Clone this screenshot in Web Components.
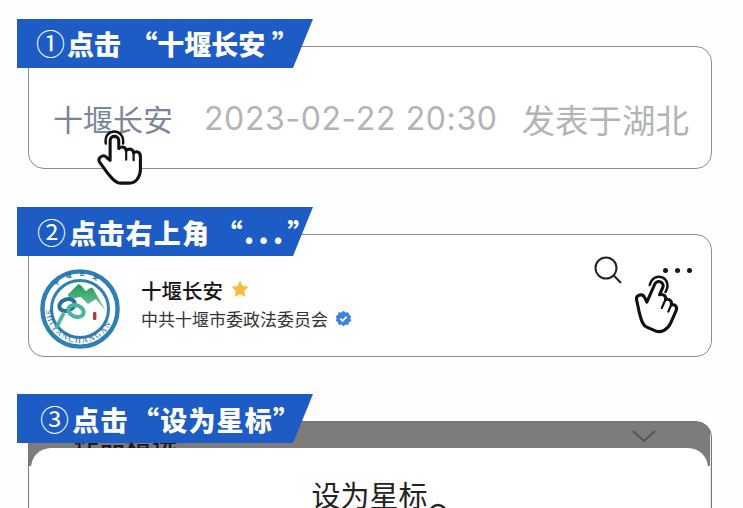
<!DOCTYPE html>
<html lang="zh-CN">
<head>
<meta charset="utf-8">
<title>设为星标</title>
<style>
html,body{margin:0;height:508px;overflow:hidden;background:#fefefe;}
body{font-family:"Noto Sans CJK SC","Noto Sans",sans-serif;}
b.dots{font-weight:900;letter-spacing:4px;font-size:30px;}
</style>
</head>
<body>
<guide-page>
  <guide-step num="①" variant="one">
    <span slot="label">点击 “十堰长安&#8197;”</span>
    <source-line name="十堰长安" time="2023-02-22 20:30" place="发表于湖北"></source-line>
    <hand-cursor style="left:68px;top:83px"></hand-cursor>
  </guide-step>
  <guide-step num="②" variant="two">
    <span slot="label">点击右上角 “<b class="dots">...</b>”</span>
    <account-row name="十堰长安" org="中共十堰市委政法委员会"></account-row>
    <hand-cursor style="left:605px;top:41px" turn="24"></hand-cursor>
  </guide-step>
  <guide-step num="③" variant="three">
    <span slot="label">点击 “设为星标”</span>
    <star-sheet title="设为星标" behind="作品精选"></star-sheet>
  </guide-step>
</guide-page>

<script>
class GuidePage extends HTMLElement {
    constructor() {
        super();
        const shadowRoot = this.attachShadow({ mode: 'open' });
        shadowRoot.innerHTML = `
        <style>
        :host{
            display:flex;
            flex-direction:column;
            gap:65px;
            padding:46px 31px 0 28px;
            height:462px;
            overflow:hidden;
        }
        ::slotted(guide-step){ flex:none; }
        </style>
        <slot></slot>
        `
    }
}
customElements.define('guide-page', GuidePage);

class GuideStep extends HTMLElement {
    constructor() {
        super();
        const shadowRoot = this.attachShadow({ mode: 'open' });
        shadowRoot.innerHTML = `
        <style>
        :host{
            display:block;
            position:relative;
            height:123px;
            box-sizing:border-box;
            border:1px solid #8c8c8c;
            border-radius:16px;
            background:#fff;
        }
        :host([variant="three"]){
            height:140px;
            background:
                linear-gradient(#e8e8e8,#e8e8e8) right 0 top 10px / 1px 100% no-repeat,
                linear-gradient(#7c7c7c 44px,#fff 44px);
            border-color:#777;
            margin-top:-1px;
        }
        .tag{
            position:absolute;
            left:-12px;
            top:-28px;
            z-index:2;
            width:296px;
            height:49px;
            box-sizing:border-box;
            padding-left:19px;
            background:#1c5cc4;
            clip-path:polygon(0 0,100% 0,276px 100%,0 100%);
            color:#fff;
            font-size:27px;
            line-height:46px;
            font-weight:900;
            white-space:pre;
            word-spacing:3px;
        }
        .num{ font-weight:400; font-size:29px; margin-right:2px; }
        :host([variant="two"]) .tag{ letter-spacing:1.2px; padding-left:20px; word-spacing:-2px; line-height:48px; }
        :host([variant="three"]) .tag{ padding-left:23px; letter-spacing:1.2px; word-spacing:-4px; line-height:48px; }
        </style>
        <div class="tag"><span class="num" id="num"></span><slot name="label"></slot></div>
        <slot></slot>
        `
    }

    connectedCallback() {
        this.shadowRoot.getElementById('num').textContent = this.getAttribute('num');
    }
}
customElements.define('guide-step', GuideStep);

class SourceLine extends HTMLElement {
    constructor() {
        super();
        const shadowRoot = this.attachShadow({ mode: 'open' });
        shadowRoot.innerHTML = `
        <style>
        :host{
            display:flex;
            align-items:center;
            height:100%;
            padding:21px 0 0 24px;
            box-sizing:border-box;
            color:#b4b4b4;
            white-space:nowrap;
        }
        .name{ color:#7a8699; font-size:30px; margin-right:31px; }
        .time{ font-family:Inter,"Noto Sans",sans-serif; font-size:32px; letter-spacing:.6px; margin-right:24px; }
        .place{ font-size:33.5px; }
        </style>
        <span class="name" id="name"></span><span class="time" id="time"></span><span class="place" id="place"></span>
        `
    }

    connectedCallback() {
        this.shadowRoot.getElementById('name').textContent = this.getAttribute('name');
        this.shadowRoot.getElementById('time').textContent = this.getAttribute('time');
        this.shadowRoot.getElementById('place').textContent = this.getAttribute('place');
    }
}
customElements.define('source-line', SourceLine);

class HandCursor extends HTMLElement {
    constructor() {
        super();
        const shadowRoot = this.attachShadow({ mode: 'open' });
        shadowRoot.innerHTML = `
        <style>
        :host{
            display:block;
            position:absolute;
            z-index:1;
            width:46px;
            height:55px;
        }
        svg{ display:block; overflow:visible; }
        </style>
        <svg id="svg" width="46" height="55" viewBox="30 14 148 178" fill="none" stroke="#111" stroke-linejoin="round" stroke-linecap="round">
          <path fill="#fff" stroke-width="10" d="M72 48C72 30 100 30 100 48L100 74C110 66 122 68 124 80C134 72 146 76 148 88C158 80 170 86 170 100L170 142C170 166 155 186 135 186L105 186C88 186 78 170 65 155L38 118C30 106 48 90 60 102L72 112Z"/>
          <path stroke-width="8" d="M58 58C50 6 120 6 114 58"/>
          <path stroke-width="7" d="M124 80L124 110M148 88L148 112"/>
        </svg>
        `
    }

    connectedCallback() {
        const turn = this.getAttribute('turn');
        if(turn){
            this.shadowRoot.getElementById('svg').style.transform = 'rotate('+turn+'deg)';
        }
    }
}
customElements.define('hand-cursor', HandCursor);

class AccountLogo extends HTMLElement {
    constructor() {
        super();
        const shadowRoot = this.attachShadow({ mode: 'open' });
        shadowRoot.innerHTML = `
        <style>
        :host{ display:block; width:80px; height:80px; flex:none; }
        svg{ display:block; }
        text{ font-family:"Liberation Serif",serif; }
        </style>
        <svg width="80" height="80" viewBox="0 0 80 80">
          <defs>
            <path id="low" d="M6 40A34 34 0 0 0 74 40"/>
            <path id="high" d="M9 38A31 31 0 0 1 71 38"/>
            <linearGradient id="hill" x1="0" y1="0" x2="0" y2="1">
              <stop offset="0" stop-color="#1f9c5c"/>
              <stop offset="1" stop-color="#7cc8a4"/>
            </linearGradient>
          </defs>
          <circle cx="40" cy="40" r="37.6" fill="#fff" stroke="#2d7fb4" stroke-width="4.4"/>
          <circle cx="40" cy="40" r="28.5" fill="#fff" stroke="#2d7fb4" stroke-width="3"/>
          <text font-size="8.4" fill="#2b6d9a" letter-spacing="1.5"><textPath href="#low" startOffset="1%">SHIYANCHANGAN</textPath></text>
          <text font-size="6" fill="#2b6d9a" font-weight="700" style="font-family:'Noto Sans CJK SC',sans-serif" letter-spacing="7"><textPath href="#high" startOffset="22%">十堰长安</textPath></text>
          <path fill="url(#hill)" d="M27.7 25.7L37.7 15.7C40 14 43 19 46 22.3C48 20 51 18 52.7 19L66 42.3L56 30L48 35L41 28L30 30Z"/>
          <ellipse cx="27" cy="36" rx="8" ry="5.6" fill="none" stroke="#27709c" stroke-width="4" transform="rotate(-20 27 36)"/>
          <ellipse cx="36" cy="42" rx="8" ry="5.6" fill="none" stroke="#49b59c" stroke-width="4" transform="rotate(20 36 42)"/>
          <path fill="none" stroke="#49b59c" stroke-width="3.6" d="M24 44C21 49 19 53 17 58"/>
          <rect x="53" y="43" width="3.4" height="8" rx="1" fill="#b53a3a"/>
        </svg>
        `
    }
}
customElements.define('account-logo', AccountLogo);

class AccountRow extends HTMLElement {
    constructor() {
        super();
        const shadowRoot = this.attachShadow({ mode: 'open' });
        shadowRoot.innerHTML = `
        <style>
        :host{
            display:flex;
            height:100%;
            box-sizing:border-box;
            padding:34px 19px 0 11px;
            align-items:flex-start;
        }
        .info{ display:flex; flex-direction:column; margin-left:21px; padding-top:6px; }
        .line{ display:flex; align-items:center; white-space:nowrap; }
        .name{ font-size:20.5px; line-height:30px; font-weight:500; color:#161616; }
        .org{ font-size:17px; line-height:26px; color:#333; margin-top:1px; }
        .star{ margin-left:7px; margin-top:-2px; }
        .badge{ margin-left:7px; }
        .tools{ display:flex; align-items:center; margin-left:auto; margin-top:-15px; height:32px; gap:40px; }
        .dots{ display:flex; gap:7px; margin-top:1px; }
        .dots i{ width:5px; height:5px; border-radius:50%; background:#151515; }
        svg{ display:block; flex:none; }
        </style>
        <account-logo></account-logo>
        <div class="info">
          <div class="line"><span class="name" id="name"></span>
            <svg class="star" width="20" height="20" viewBox="0 0 24 24"><path fill="#f6bd3c" d="M12 1.8l3.1 6.7 7.3.9-5.4 5 1.4 7.3L12 18.1l-6.4 3.6L7 14.4l-5.4-5 7.3-.9z"/></svg>
          </div>
          <div class="line"><span class="org" id="org"></span>
            <svg class="badge" width="17" height="17" viewBox="0 0 24 24"><path fill="#3a82dc" d="M12 1l3 2.4 3.8-.4 1 3.7 3.2 2.1L21.6 12l1.4 3.2-3.2 2.1-1 3.7-3.8-.4L12 23l-3-2.4-3.8.4-1-3.7L1 15.2 2.4 12 1 8.8l3.2-2.1 1-3.7L9 3.4z"/><path fill="none" stroke="#fff" stroke-width="2.6" d="M7.5 12.2l3.2 3.2 5.8-6"/></svg>
          </div>
        </div>
        <div class="tools">
          <svg width="29" height="29" viewBox="0 0 29 29" fill="none" stroke="#222" stroke-width="2"><circle cx="12" cy="12" r="10.5"/><path d="M19.8 19.5l7.2 7.5"/></svg>
          <div class="dots"><i></i><i></i><i></i></div>
        </div>
        `
    }

    connectedCallback() {
        this.shadowRoot.getElementById('name').textContent = this.getAttribute('name');
        this.shadowRoot.getElementById('org').textContent = this.getAttribute('org');
    }
}
customElements.define('account-row', AccountRow);

class StarSheet extends HTMLElement {
    constructor() {
        super();
        const shadowRoot = this.attachShadow({ mode: 'open' });
        shadowRoot.innerHTML = `
        <style>
        :host{
            display:flex;
            flex-direction:column;
            height:100%;
            box-sizing:border-box;
            padding:0 3px 0 2px;
            overflow:hidden;
        }
        .bar{
            flex:none;
            display:flex;
            justify-content:space-between;
            height:26px;
            padding:0 52px 0 43px;
            overflow:hidden;
        }
        .behind{ font-size:25px; line-height:25px; font-weight:500; color:#1a1a1a; letter-spacing:1px; margin-top:9px; }
        .bar svg{ margin-top:8px; }
        .sheet{
            flex:1;
            position:relative;
            background:#fff;
            border-radius:20px 20px 0 0;
            text-align:center;
            padding-top:26px;
            color:#222;
            font-size:29px;
            line-height:40px;
        }
        .title{ position:relative; display:inline-block; }
        .title svg{ position:absolute; left:100%; top:29px; }
        </style>
        <div class="bar">
          <span class="behind" id="behind"></span>
          <svg width="24" height="13" viewBox="0 0 24 13" fill="none" stroke="#555" stroke-width="2"><path d="M1 1l11 10L23 1"/></svg>
        </div>
        <div class="sheet">
          <span class="title"><span id="title"></span><svg width="20" height="20" viewBox="0 0 20 20" fill="none" stroke="#222" stroke-width="2.4"><circle cx="10" cy="10" r="8"/></svg></span>
        </div>
        `
    }

    connectedCallback() {
        this.shadowRoot.getElementById('title').textContent = this.getAttribute('title');
        this.shadowRoot.getElementById('behind').textContent = this.getAttribute('behind');
    }
}
customElements.define('star-sheet', StarSheet);
</script>
</body>
</html>
